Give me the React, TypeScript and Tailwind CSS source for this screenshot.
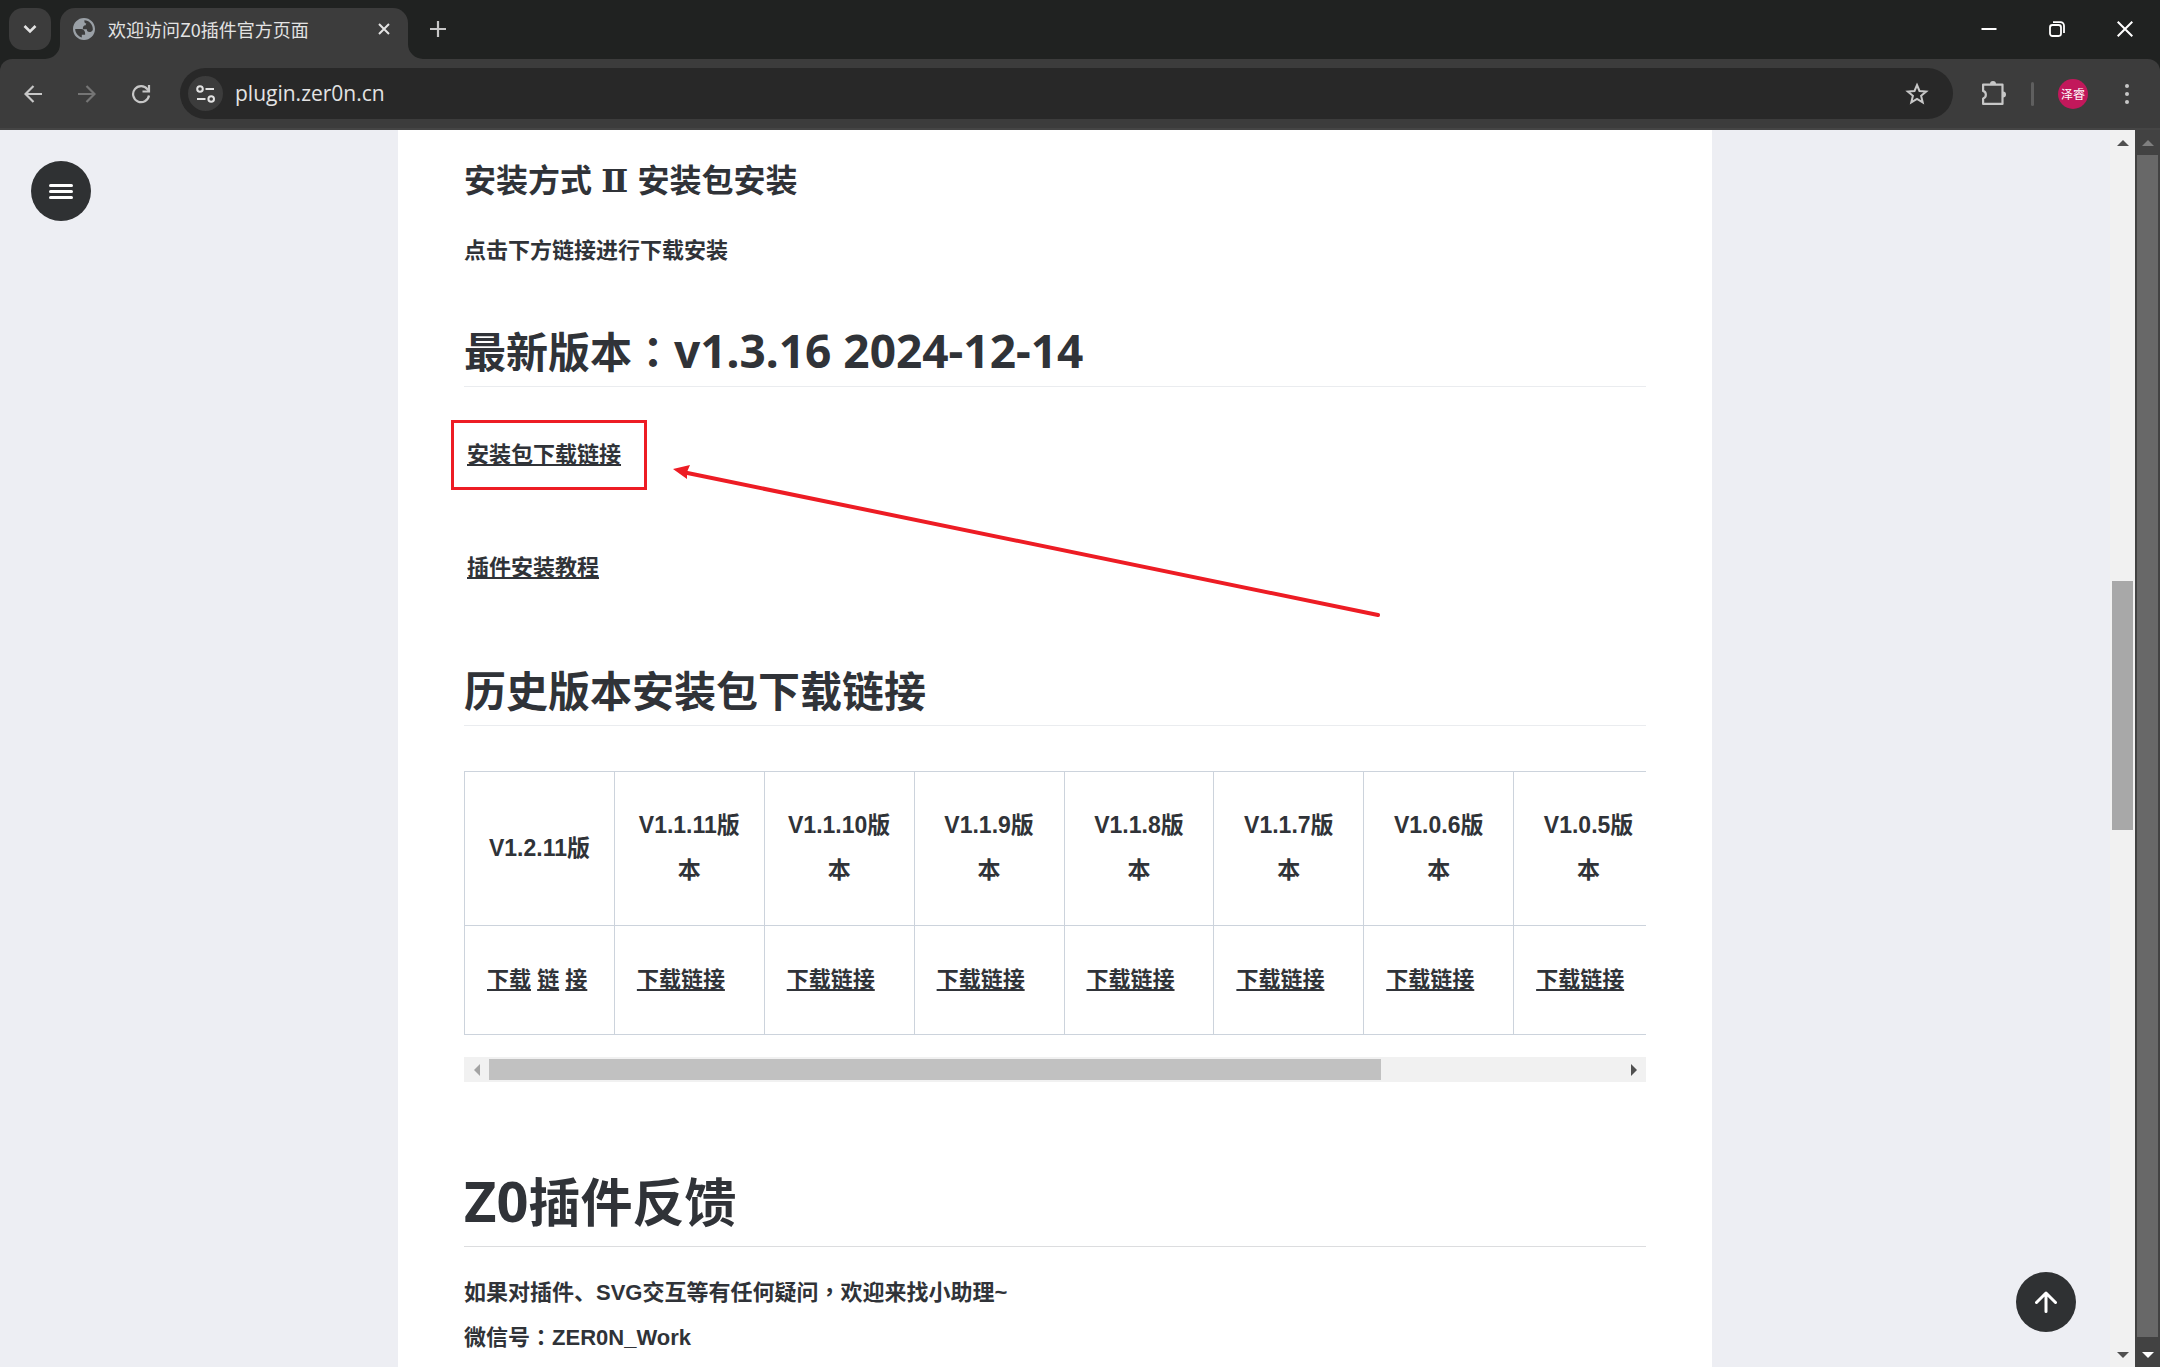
import type { ReactNode } from 'react';

const versions = [
  { name: 'V1.2.11版', links: ['下载', '链', '接'] },
  { name: 'V1.1.11版本', links: ['下载链接'] },
  { name: 'V1.1.10版本', links: ['下载链接'] },
  { name: 'V1.1.9版本', links: ['下载链接'] },
  { name: 'V1.1.8版本', links: ['下载链接'] },
  { name: 'V1.1.7版本', links: ['下载链接'] },
  { name: 'V1.0.6版本', links: ['下载链接'] },
  { name: 'V1.0.5版本', links: ['下载链接'] },
];

const TabStrip = () => (
  <div className="flex h-[59px] shrink-0 items-start pt-2 pl-[9px] text-[#e3e3e3]">
    <button aria-label="Search tabs" className="flex size-[42px] items-center justify-center rounded-[14px] bg-[#3c3c3c]">
      <svg width="14" height="10" viewBox="0 0 14 10" fill="none" stroke="currentColor" strokeWidth="2.6">
        <path d="M1.5 2 7 7.5 12.5 2" />
      </svg>
    </button>
    <div className="relative ml-[9px] flex h-[51px] w-[348px] items-start rounded-t-[15px] bg-[#3c3c3c] pl-[13px]">
      {/* curved feet of the active tab */}
      <svg className="absolute bottom-0 -left-[15px]" width="15" height="15" viewBox="0 0 15 15">
        <path d="M15 0v15H0A15 15 0 0 0 15 0z" fill="#3c3c3c" />
      </svg>
      <svg className="absolute -right-[15px] bottom-0" width="15" height="15" viewBox="0 0 15 15">
        <path d="M0 0v15h15A15 15 0 0 1 0 0z" fill="#3c3c3c" />
      </svg>
      <div className="flex h-[42px] w-full items-center">
        <svg width="22" height="22" viewBox="2 2 20 20" fill="#9aa0a6">
          <path d="M12 2C6.48 2 2 6.48 2 12s4.48 10 10 10 10-4.48 10-10S17.52 2 12 2zM4 12h4.4c3.4.02 4.9 1.73 4.6 5.14H10v2.5c-3.4-1-6-4.2-6-7.64zm16 0c0 .3 0 .5-.04.8-.7 1.3-1.7 1.9-3 1.9-1.6 0-2.4-.8-2.4-2.4h-3.5c-.4-2.3.4-3.5 2.5-3.7 0-.7.2-1.3.6-1.6-1.4-.1-2-.9-1.8-2.9C16.6 4.2 20 7.9 20 12z" />
        </svg>
        <span className="ml-[13px] text-[18px] leading-6">欢迎访问Z0插件官方页面</span>
        <button aria-label="Close tab" className="mr-3 ml-auto flex size-6 items-center justify-center">
          <svg width="12" height="12" viewBox="0 0 12 12" stroke="currentColor" strokeWidth="2">
            <path d="m1 1 10 10M11 1 1 11" />
          </svg>
        </button>
      </div>
    </div>
    <button aria-label="New tab" className="ml-[9px] flex size-[42px] items-center justify-center">
      <svg width="16" height="16" viewBox="0 0 16 16" stroke="#c7c7c7" strokeWidth="2.2">
        <path d="M8 0v16M0 8h16" />
      </svg>
    </button>
    <div className="-mt-2 ml-auto flex h-[57px] text-white">
      <button aria-label="Minimize" className="flex w-[68px] items-center justify-center">
        <svg width="16" height="16" viewBox="0 0 16 16" stroke="currentColor" strokeWidth="2">
          <path d="M.5 8h15" />
        </svg>
      </button>
      <button aria-label="Restore" className="flex w-[68px] items-center justify-center">
        <svg width="16" height="16" viewBox="0 0 16 16" fill="none" stroke="currentColor" strokeWidth="1.8">
          <rect x="1" y="4" width="11" height="11" rx="2.4" />
          <path d="M4 1.2h7.5A3.5 3.5 0 0 1 15 4.7V12" />
        </svg>
      </button>
      <button aria-label="Close" className="mr-px flex w-[68px] items-center justify-center">
        <svg width="16" height="16" viewBox="0 0 16 16" stroke="currentColor" strokeWidth="2">
          <path d="m.7.7 14.6 14.6M15.3.7.7 15.3" />
        </svg>
      </button>
    </div>
  </div>
);

const Toolbar = () => (
  <div className="flex h-[71px] shrink-0 items-center rounded-t-[12px] border-b-2 border-[#454545] bg-[#3c3c3c] pr-[21px] pl-[6px] text-[#c7c7c7]">
    <button aria-label="Back" className="flex h-12 w-[54px] items-center justify-center">
      <svg width="18" height="18" viewBox="0 0 18 18" fill="none" stroke="currentColor" strokeWidth="2.2">
        <path d="M18 9H1.5M9.5 1 1.5 9l8 8" />
      </svg>
    </button>
    <button aria-label="Forward" className="flex h-12 w-[54px] items-center justify-center text-[#757575]">
      <svg width="18" height="18" viewBox="0 0 18 18" fill="none" stroke="currentColor" strokeWidth="2.2">
        <path d="M0 9h16.5M8.5 1l8 8-8 8" />
      </svg>
    </button>
    <button aria-label="Reload" className="flex h-12 w-[54px] items-center justify-center">
      <svg width="20" height="20" viewBox="0 0 20 20" fill="none" stroke="currentColor" strokeWidth="2.2">
        <path d="M18 11.5A8 8 0 1 1 16.5 5.3L18 7" />
        <path d="M18 1v6.5h-6.5" />
      </svg>
    </button>
    <div className="ml-3 flex h-[51px] min-w-0 flex-1 items-center rounded-full bg-[#282828] pr-6 pl-2">
      <button aria-label="View site information" className="flex size-[35px] shrink-0 items-center justify-center rounded-full bg-[#3c3c3c] text-[#e3e3e3]">
        <svg width="19" height="18" viewBox="0 0 19 18" fill="none" stroke="currentColor" strokeWidth="2">
          <circle cx="4" cy="4" r="2.8" />
          <path d="M9.5 4H18M1 14h8.5" />
          <circle cx="15.2" cy="14" r="2.8" />
        </svg>
      </button>
      <input
        aria-label="Address"
        defaultValue="plugin.zer0n.cn"
        className="ml-3 min-w-0 flex-1 bg-transparent font-['Open_Sans','Noto_Sans',sans-serif] text-[21px] text-[#e3e3e3] outline-none"
      />
      <button aria-label="Bookmark this page" className="shrink-0">
        <svg width="24" height="24" viewBox="0 0 24 24" fill="none" stroke="currentColor" strokeWidth="2">
          <path d="m12 3 2.5 6 6.7.5-5.1 4.3 1.6 6.5L12 16.8l-5.7 3.5 1.6-6.5-5.1-4.3L9.5 9z" />
        </svg>
      </button>
    </div>
    <button aria-label="Extensions" className="ml-[13px] flex h-12 w-[54px] items-center justify-center">
      <svg width="26" height="26" viewBox="0 0 26 26" fill="none" stroke="currentColor" strokeWidth="2.2" strokeLinejoin="round">
        <path d="M3.1 3.6h19.4v19.3H3.1v-5.4a4 4 0 0 0 0-7.6z" />
        <path d="M10 3a3 3 0 0 1 6 0zM23 10.4a3 3 0 0 1 0 6z" fill="currentColor" stroke="none" />
      </svg>
    </button>
    <div className="ml-[11px] h-6 w-[3px] rounded-full bg-[#5f5f5f]" />
    <button className="ml-6 flex size-[30px] items-center justify-center rounded-full bg-[#c2185b] text-[12px] whitespace-nowrap text-white">
      泽睿
    </button>
    <button aria-label="Menu" className="ml-[27px] flex h-12 w-6 flex-col items-center justify-center gap-1">
      <span className="size-1 rounded-full bg-current" />
      <span className="size-1 rounded-full bg-current" />
      <span className="size-1 rounded-full bg-current" />
    </button>
  </div>
);

const Arrow = ({ d }: { d: string }) => (
  <svg width="12" height="12" viewBox="0 0 12 12" fill="currentColor">
    <path d={d} />
  </svg>
);

const UP = 'M0 9 6 3l6 6z';
const DOWN = 'M0 3h12L6 9z';
const LEFT = 'M9 0v12L3 6z';
const RIGHT = 'M3 0v12l6-6z';

const PageScrollbar = () => (
  <div className="flex w-[25px] shrink-0 flex-col items-center bg-[#f1f1f1] text-[#505050]">
    <button aria-label="Scroll page up" className="flex h-[25px] w-full items-center justify-center"><Arrow d={UP} /></button>
    <div className="w-full flex-[426]" />
    <div className="w-[21px] flex-[249] bg-[#a8a8a8]" />
    <div className="w-full flex-[512]" />
    <button aria-label="Scroll page down" className="flex h-[25px] w-full items-center justify-center"><Arrow d={DOWN} /></button>
  </div>
);

const WindowScrollbar = () => (
  <div className="flex w-[25px] shrink-0 flex-col items-center bg-[#424242]">
    <button aria-label="Scroll window up" className="flex h-[25px] w-full items-center justify-center text-[#7f7f7f]"><Arrow d={UP} /></button>
    <div className="w-[21px] flex-1 bg-[#686868]" />
    <div className="h-[5px] w-full" />
    <button aria-label="Scroll window down" className="flex h-[25px] w-full items-center justify-center text-white"><Arrow d={DOWN} /></button>
  </div>
);

// fullwidth punctuation that sits in the middle of its box
const Mark = ({ children }: { children: ReactNode }) => (
  <span className="font-['Noto_Sans_CJK_TC',sans-serif] leading-none">{children}</span>
);

const SectionTitle = ({ children }: { children: ReactNode }) => (
  <h2 className="border-b border-[#eaecef] pb-2 font-['Noto_Sans_CJK_SC',sans-serif] text-[42px] leading-[56px] font-bold">{children}</h2>
);

const VersionTable = () => (
  <div className="mt-[45px]">
    <div className="overflow-hidden">
      <table className="w-[1200px] table-fixed border-collapse">
        <thead>
          <tr>
            {versions.map((v) => (
              <th key={v.name} scope="col" className="border border-[#ccd3dc] px-[22px] pt-[31px] pb-8 text-center align-middle text-[23px] leading-[45px] break-all">
                {v.name}
              </th>
            ))}
          </tr>
        </thead>
        <tbody>
          <tr>
            {versions.map((v) => (
              <td key={v.name} className="border border-[#ccd3dc] px-[22px] pt-[31px] pb-8 whitespace-nowrap">
                {v.links.map((text, i) => (
                  <span key={text}>
                    {i > 0 && ' '}
                    <a href="#download" className="underline decoration-2 underline-offset-2">{text}</a>
                  </span>
                ))}
              </td>
            ))}
          </tr>
        </tbody>
      </table>
    </div>
    <div className="mt-[22px] flex h-[25px] items-center bg-[#f1f1f1]">
      <button aria-label="Scroll table left" className="flex h-full w-[25px] items-center justify-center text-[#a3a3a3]"><Arrow d={LEFT} /></button>
      <div className="h-[21px] flex-[892] bg-[#c1c1c1]" />
      <div className="flex-[240]" />
      <button aria-label="Scroll table right" className="flex h-full w-[25px] items-center justify-center text-[#505050]"><Arrow d={RIGHT} /></button>
    </div>
  </div>
);

const Article = () => (
  <article className="relative mx-auto w-full max-w-[1314px] bg-white px-[66px] pt-6 font-['Liberation_Sans','Noto_Sans_CJK_SC',sans-serif] text-[22px] leading-[45px] font-bold text-[#303338]">
    <h3 className="font-['Noto_Sans_CJK_SC',sans-serif] text-[32px] leading-[48px]">
      安装方式 <span className="mx-0.5 font-['DejaVu_Serif',serif] leading-none">Ⅱ</span> 安装包安装
    </h3>
    <p className="mt-[26px]">点击下方链接进行下载安装</p>

    <div className="mt-[49px]">
      <SectionTitle>
        最新版本<Mark>：</Mark><span className="font-['Noto_Sans',sans-serif] text-[46px] leading-none">v1.3.16 2024-12-14</span>
      </SectionTitle>
    </div>
    <p className="mt-[45px] px-[3px]">
      <a href="#package" className="underline decoration-2 underline-offset-2">安装包下载链接</a>
    </p>
    <p className="mt-[68px] px-[3px]">
      <a href="#guide" className="underline decoration-2 underline-offset-2">插件安装教程</a>
    </p>

    <div className="mt-[71px]">
      <SectionTitle>历史版本安装包下载链接</SectionTitle>
    </div>
    <VersionTable />

    <h1 className="mt-[86px] border-b border-[#dcdddf] pb-[14px] font-['Noto_Sans_CJK_SC',sans-serif] text-[52px] leading-[64px]">
      <span className="font-['Noto_Sans',sans-serif] text-[56px] leading-none">Z0</span>插件反馈
    </h1>
    <p className="mt-[23px]">如果对插件、SVG交互等有任何疑问<Mark>，</Mark>欢迎来找小助理~</p>
    <p>微信号<Mark>：</Mark>ZER0N_Work</p>

    {/* red callout over the download link */}
    <div className="pointer-events-none absolute top-[290px] left-[53px] h-[70px] w-[196px] border-3 border-[#ed1c24]" />
    <svg className="pointer-events-none absolute top-[330px] left-[272px]" width="712" height="160" viewBox="0 0 712 160">
      <path d="m15 12.5 693 142.5" stroke="#ed1c24" strokeWidth="4" strokeLinecap="round" />
      <path d="m3 9 17-4-3 7 0 7z" fill="#ed1c24" />
    </svg>
  </article>
);

export default function App() {
  return (
    <div className="flex h-screen flex-col overflow-hidden bg-[#202221] font-['Noto_Sans_CJK_SC',sans-serif]">
      <TabStrip />
      <Toolbar />
      <div className="flex min-h-0 flex-1">
        <main className="relative flex min-w-0 flex-1 overflow-hidden bg-[#edeef3]">
          <Article />
          <button aria-label="Open menu" className="absolute top-[31px] left-[31px] flex size-[60px] flex-col items-center justify-center gap-[3px] rounded-full bg-[#2f3133]">
            <span className="h-[3px] w-6 rounded-full bg-white" />
            <span className="h-[3px] w-6 rounded-full bg-white" />
            <span className="h-[3px] w-6 rounded-full bg-white" />
          </button>
          <button aria-label="Back to top" className="absolute right-[34px] bottom-[35px] flex size-[60px] items-center justify-center rounded-full bg-[#2f3133] text-white">
            <svg width="22" height="22" viewBox="0 0 22 22" fill="none" stroke="currentColor" strokeWidth="3" strokeLinecap="round" strokeLinejoin="round">
              <path d="M11 20.5V2M1.5 11.5 11 2l9.5 9.5" />
            </svg>
          </button>
        </main>
        <PageScrollbar />
        <WindowScrollbar />
      </div>
    </div>
  );
}
